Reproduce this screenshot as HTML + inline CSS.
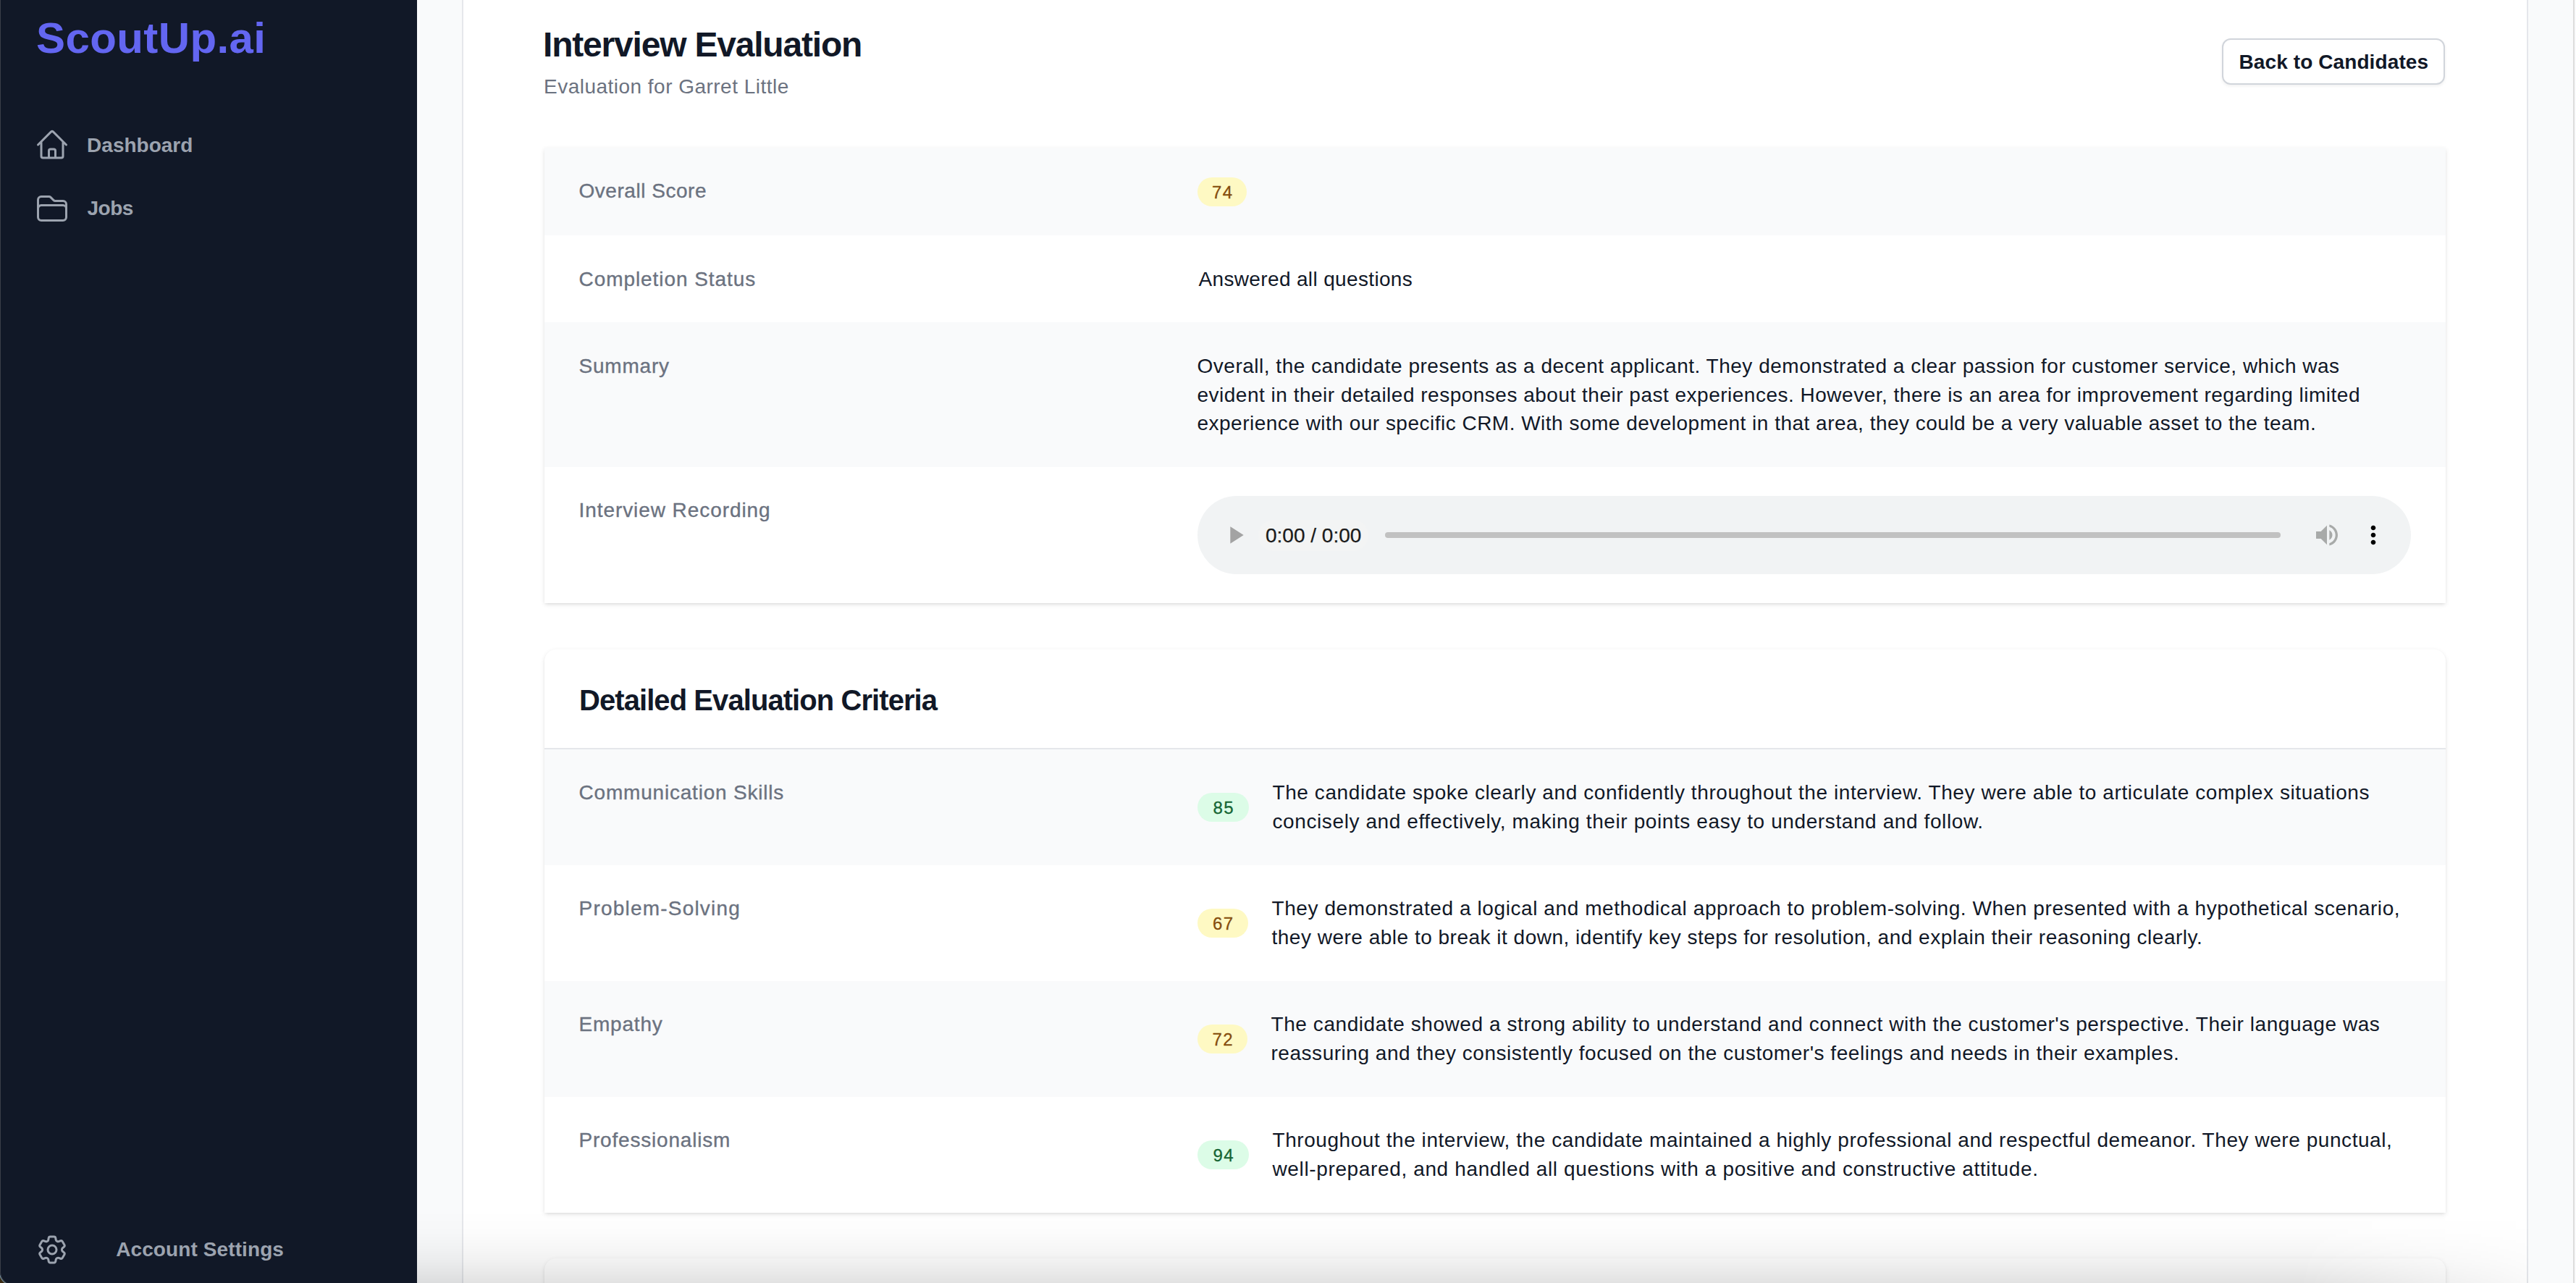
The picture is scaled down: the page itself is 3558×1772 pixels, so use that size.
<!DOCTYPE html>
<html><head><meta charset="utf-8"><title>Interview Evaluation</title>
<style>
html,body{margin:0;padding:0}
body{width:3558px;height:1772px;overflow:hidden;position:relative;background:#f9fafb;font-family:"Liberation Sans",sans-serif;}
.t{position:absolute;white-space:nowrap;}
.abs{position:absolute;}
</style></head><body>
<div class="abs" style="left:0;top:0;width:576px;height:1772px;background:#111827;"></div>
<div class="abs" style="left:0;top:0;width:1px;height:1772px;background:#3b3f48;"></div>
<div class="t" style="left:50.0px;top:18.2px;font-size:60px;line-height:70px;color:#6366f1;font-weight:700;letter-spacing:0.4px;">ScoutUp.ai</div>
<svg style="position:absolute;left:48px;top:176px" width="48" height="48" viewBox="0 0 24 24" fill="none" stroke="#9ca3af" stroke-width="1.5" stroke-linecap="round" stroke-linejoin="round"><path d="m2.25 12 8.954-8.955c.44-.439 1.152-.439 1.591 0L21.75 12M4.5 9.75v10.125c0 .621.504 1.125 1.125 1.125H9.75v-4.875c0-.621.504-1.125 1.125-1.125h2.25c.621 0 1.125.504 1.125 1.125V21h4.125c.621 0 1.125-.504 1.125-1.125V9.75M8.25 21h8.25"/></svg>
<div class="t" style="left:120.1px;top:180.8px;font-size:28px;line-height:40px;color:#9ca3af;font-weight:700;letter-spacing:0px;">Dashboard</div>
<svg style="position:absolute;left:48px;top:264px" width="48" height="48" viewBox="0 0 24 24" fill="none" stroke="#9ca3af" stroke-width="1.5" stroke-linecap="round" stroke-linejoin="round"><path d="M2.25 12.75V12A2.25 2.25 0 0 1 4.5 9.75h15A2.25 2.25 0 0 1 21.75 12v.75m-8.69-6.44-2.12-2.12a1.5 1.5 0 0 0-1.061-.44H4.5A2.25 2.25 0 0 0 2.25 6v12a2.25 2.25 0 0 0 2.25 2.25h15A2.25 2.25 0 0 0 21.75 18V9a2.25 2.25 0 0 0-2.25-2.25h-5.379a1.5 1.5 0 0 1-1.06-.44Z"/></svg>
<div class="t" style="left:120.5px;top:268.1px;font-size:28px;line-height:40px;color:#9ca3af;font-weight:700;letter-spacing:-0.5px;">Jobs</div>
<svg style="position:absolute;left:48px;top:1702px" width="48" height="48" viewBox="0 0 24 24" fill="none" stroke="#9ca3af" stroke-width="1.5" stroke-linecap="round" stroke-linejoin="round"><path d="M9.594 3.94c.09-.542.56-.94 1.11-.94h2.593c.55 0 1.02.398 1.11.94l.213 1.281c.063.374.313.686.645.87.074.04.147.083.22.127.325.196.72.257 1.075.124l1.217-.456a1.125 1.125 0 0 1 1.37.49l1.296 2.247a1.125 1.125 0 0 1-.26 1.431l-1.003.827c-.293.241-.438.613-.43.992a7.723 7.723 0 0 1 0 .255c-.008.378.137.75.43.991l1.004.827c.424.35.534.955.26 1.43l-1.298 2.247a1.125 1.125 0 0 1-1.369.491l-1.217-.456c-.355-.133-.75-.072-1.076.124a6.47 6.47 0 0 1-.22.128c-.331.183-.581.495-.644.869l-.213 1.281c-.09.543-.56.94-1.11.94h-2.594c-.55 0-1.019-.398-1.11-.94l-.213-1.281c-.062-.374-.312-.686-.644-.87a6.52 6.52 0 0 1-.22-.127c-.325-.196-.72-.257-1.076-.124l-1.217.456a1.125 1.125 0 0 1-1.369-.49l-1.297-2.247a1.125 1.125 0 0 1 .26-1.431l1.004-.827c.292-.24.437-.613.43-.991a6.932 6.932 0 0 1 0-.255c.007-.38-.138-.751-.43-.992l-1.004-.827a1.125 1.125 0 0 1-.26-1.43l1.297-2.247a1.125 1.125 0 0 1 1.37-.491l1.216.456c.356.133.751.072 1.076-.124.072-.044.146-.086.22-.128.332-.183.582-.495.644-.869l.214-1.28ZM15 12a3 3 0 1 1-6 0 3 3 0 0 1 6 0Z"/></svg>
<div class="t" style="left:160.2px;top:1706.2px;font-size:28px;line-height:40px;color:#9ca3af;font-weight:700;letter-spacing:0.1px;">Account Settings</div>
<div class="abs" style="left:638px;top:0;width:2850px;height:1772px;background:#fff;border-left:2px solid #e5e7eb;border-right:2px solid #e5e7eb;"></div>
<div class="abs" style="left:3554px;top:0;width:2px;height:1772px;background:#dcdcdc;"></div>
<div class="t" style="left:750.0px;top:30.2px;font-size:48px;line-height:64px;color:#111827;font-weight:700;letter-spacing:-1.2px;">Interview Evaluation</div>
<div class="t" style="left:751.0px;top:100.2px;font-size:28px;line-height:40px;color:#6b7280;font-weight:400;letter-spacing:0.48px;">Evaluation for Garret Little</div>
<div class="abs" style="left:3069px;top:53px;width:304px;height:60px;border:2px solid #d1d5db;border-radius:12px;background:#fff;box-shadow:0 2px 4px rgba(0,0,0,0.06);"></div>
<div class="t" style="left:3092.5px;top:66.2px;font-size:28px;line-height:40px;color:#111827;font-weight:700;letter-spacing:0.1px;">Back to Candidates</div>
<div class="abs" style="left:752px;top:204px;width:2626px;height:629px;background:#fff;border-radius:0;box-shadow:0 2px 6px rgba(0,0,0,0.10),0 2px 4px -2px rgba(0,0,0,0.10);"></div>
<div class="abs" style="left:752px;top:204px;width:2626px;height:121px;background:#f9fafb;"></div>
<div class="abs" style="left:752px;top:445px;width:2626px;height:200px;background:#f9fafb;"></div>
<div class="t" style="left:799.5px;top:243.8px;font-size:28px;line-height:40px;color:#6b7280;font-weight:400;letter-spacing:0.53px;-webkit-text-stroke:0.35px #6b7280;">Overall Score</div>
<div class="t" style="left:799.5px;top:365.5px;font-size:28px;line-height:40px;color:#6b7280;font-weight:400;letter-spacing:0.94px;-webkit-text-stroke:0.35px #6b7280;">Completion Status</div>
<div class="t" style="left:799.5px;top:485.6px;font-size:28px;line-height:40px;color:#6b7280;font-weight:400;letter-spacing:0.8px;-webkit-text-stroke:0.35px #6b7280;">Summary</div>
<div class="t" style="left:799.5px;top:685.1px;font-size:28px;line-height:40px;color:#6b7280;font-weight:400;letter-spacing:0.93px;-webkit-text-stroke:0.35px #6b7280;">Interview Recording</div>
<div class="abs" style="left:1654px;top:245px;width:68px;height:40px;border-radius:20px;background:#fef9c3;"></div>
<div class="t" style="left:1654px;width:68px;text-align:center;top:250.0px;font-size:24px;line-height:32px;color:#854d0e;letter-spacing:1.5px;text-indent:1.5px;-webkit-text-stroke:0.3px currentColor;">74</div>
<div class="t" style="left:1655.5px;top:365.7px;font-size:28px;line-height:40px;color:#111827;font-weight:400;letter-spacing:0.35px;">Answered all questions</div>
<div class="t" style="left:1653.5px;top:485.8px;font-size:28px;line-height:40px;color:#111827;font-weight:400;letter-spacing:0.51px;">Overall, the candidate presents as a decent applicant. They demonstrated a clear passion for customer service, which was</div>
<div class="t" style="left:1653.5px;top:525.6px;font-size:28px;line-height:40px;color:#111827;font-weight:400;letter-spacing:0.5px;">evident in their detailed responses about their past experiences. However, there is an area for improvement regarding limited</div>
<div class="t" style="left:1653.5px;top:565.4px;font-size:28px;line-height:40px;color:#111827;font-weight:400;letter-spacing:0.49px;">experience with our specific CRM. With some development in that area, they could be a very valuable asset to the team.</div>
<div class="abs" style="left:1654px;top:685px;width:1676px;height:108px;border-radius:54px;background:#f1f3f4;"></div>
<svg class="abs" style="left:1685.7px;top:718.9px" width="40" height="40" viewBox="0 0 24 24"><path d="M8 5v14l11-7z" fill="#a3a3a3"/></svg>
<div class="abs" style="left:1738px;top:718px;width:152px;height:43px;border-radius:21px;background:#f3f4f4;"></div>
<div class="t" style="left:1748.0px;top:719.6px;font-size:28px;line-height:40px;color:#1a1a1a;font-weight:400;letter-spacing:0px;-webkit-text-stroke:0.25px #1a1a1a;">0:00 / 0:00</div>
<div class="abs" style="left:1913px;top:735px;width:1237px;height:8px;border-radius:4px;background:#c1c1c1;"></div>
<svg class="abs" style="left:3194px;top:718.8px" width="40" height="40" viewBox="0 0 24 24"><path d="M3 9v6h4l5 5V4L7 9H3zm13.5 3c0-1.77-1.02-3.29-2.5-4.03v8.05c1.48-.73 2.5-2.25 2.5-4.02zM14 3.23v2.06c2.89.86 5 3.54 5 6.71s-2.11 5.85-5 6.71v2.06c4.01-.91 7-4.49 7-8.77s-2.99-7.86-7-8.77z" fill="#a8aaa9"/></svg>
<svg class="abs" style="left:3258px;top:719px" width="40" height="40" viewBox="0 0 24 24"><path d="M12 8c1.1 0 2-.9 2-2s-.9-2-2-2-2 .9-2 2 .9 2 2 2zm0 2c-1.1 0-2 .9-2 2s.9 2 2 2 2-.9 2-2-.9-2-2-2zm0 6c-1.1 0-2 .9-2 2s.9 2 2 2 2-.9 2-2-.9-2-2-2z" fill="#000"/></svg>
<div class="abs" style="left:752px;top:897px;width:2626px;height:778px;background:#fff;border-radius:16px 16px 0 0;box-shadow:0 2px 6px rgba(0,0,0,0.10),0 2px 4px -2px rgba(0,0,0,0.10);"></div>
<div class="t" style="left:800.0px;top:939.0px;font-size:40px;line-height:56px;color:#111827;font-weight:700;letter-spacing:-0.93px;">Detailed Evaluation Criteria</div>
<div class="abs" style="left:752px;top:1033px;width:2626px;height:2px;background:#e5e7eb;"></div>
<div class="abs" style="left:752px;top:1035px;width:2626px;height:160px;background:#f9fafb;"></div>
<div class="t" style="left:799.5px;top:1075.2px;font-size:28px;line-height:40px;color:#6b7280;font-weight:400;letter-spacing:0.8px;-webkit-text-stroke:0.35px #6b7280;">Communication Skills</div>
<div class="abs" style="left:1654px;top:1095px;width:71px;height:40px;border-radius:20px;background:#dcfce7;"></div>
<div class="t" style="left:1654px;width:71px;text-align:center;top:1100.0px;font-size:24px;line-height:32px;color:#166534;letter-spacing:1.5px;text-indent:1.5px;-webkit-text-stroke:0.3px currentColor;">85</div>
<div class="t" style="left:1757.5px;top:1075.1px;font-size:28px;line-height:40px;color:#111827;font-weight:400;letter-spacing:0.5862068965517242px;">The candidate spoke clearly and confidently throughout the interview. They were able to articulate complex situations</div>
<div class="t" style="left:1757.5px;top:1115.3px;font-size:28px;line-height:40px;color:#111827;font-weight:400;letter-spacing:0.5986842105263158px;">concisely and effectively, making their points easy to understand and follow.</div>
<div class="t" style="left:799.5px;top:1235.2px;font-size:28px;line-height:40px;color:#6b7280;font-weight:400;letter-spacing:1.21px;-webkit-text-stroke:0.35px #6b7280;">Problem-Solving</div>
<div class="abs" style="left:1654px;top:1255px;width:70px;height:40px;border-radius:20px;background:#fef9c3;"></div>
<div class="t" style="left:1654px;width:70px;text-align:center;top:1260.0px;font-size:24px;line-height:32px;color:#854d0e;letter-spacing:1.5px;text-indent:1.5px;-webkit-text-stroke:0.3px currentColor;">67</div>
<div class="t" style="left:1756.5px;top:1235.1px;font-size:28px;line-height:40px;color:#111827;font-weight:400;letter-spacing:0.5826086956521739px;">They demonstrated a logical and methodical approach to problem-solving. When presented with a hypothetical scenario,</div>
<div class="t" style="left:1756.5px;top:1275.3px;font-size:28px;line-height:40px;color:#111827;font-weight:400;letter-spacing:0.5px;">they were able to break it down, identify key steps for resolution, and explain their reasoning clearly.</div>
<div class="abs" style="left:752px;top:1355px;width:2626px;height:160px;background:#f9fafb;"></div>
<div class="t" style="left:799.5px;top:1395.2px;font-size:28px;line-height:40px;color:#6b7280;font-weight:400;letter-spacing:0.8px;-webkit-text-stroke:0.35px #6b7280;">Empathy</div>
<div class="abs" style="left:1654px;top:1415px;width:69px;height:40px;border-radius:20px;background:#fef9c3;"></div>
<div class="t" style="left:1654px;width:69px;text-align:center;top:1420.0px;font-size:24px;line-height:32px;color:#854d0e;letter-spacing:1.5px;text-indent:1.5px;-webkit-text-stroke:0.3px currentColor;">72</div>
<div class="t" style="left:1755.5px;top:1395.1px;font-size:28px;line-height:40px;color:#111827;font-weight:400;letter-spacing:0.5701754385964912px;">The candidate showed a strong ability to understand and connect with the customer's perspective. Their language was</div>
<div class="t" style="left:1755.5px;top:1435.3px;font-size:28px;line-height:40px;color:#111827;font-weight:400;letter-spacing:0.53125px;">reassuring and they consistently focused on the customer's feelings and needs in their examples.</div>
<div class="t" style="left:799.5px;top:1555.2px;font-size:28px;line-height:40px;color:#6b7280;font-weight:400;letter-spacing:0.8px;-webkit-text-stroke:0.35px #6b7280;">Professionalism</div>
<div class="abs" style="left:1654px;top:1575px;width:71px;height:40px;border-radius:20px;background:#dcfce7;"></div>
<div class="t" style="left:1654px;width:71px;text-align:center;top:1580.0px;font-size:24px;line-height:32px;color:#166534;letter-spacing:1.5px;text-indent:1.5px;-webkit-text-stroke:0.3px currentColor;">94</div>
<div class="t" style="left:1757.5px;top:1555.1px;font-size:28px;line-height:40px;color:#111827;font-weight:400;letter-spacing:0.5603448275862069px;">Throughout the interview, the candidate maintained a highly professional and respectful demeanor. They were punctual,</div>
<div class="t" style="left:1757.5px;top:1595.3px;font-size:28px;line-height:40px;color:#111827;font-weight:400;letter-spacing:0.6341463414634146px;">well-prepared, and handled all questions with a positive and constructive attitude.</div>
<div class="abs" style="left:752px;top:1738px;width:2626px;height:200px;background:#fff;border-radius:16px;box-shadow:0 2px 6px rgba(0,0,0,0.10),0 2px 4px -2px rgba(0,0,0,0.10);"></div>
<div class="abs" style="left:576px;top:1672px;width:2916px;height:100px;background:linear-gradient(to bottom,rgba(0,0,0,0) 0px,rgba(0,0,0,0.012) 30px,rgba(0,0,0,0.035) 55px,rgba(0,0,0,0.06) 72px,rgba(0,0,0,0.115) 100px);-webkit-mask-image:linear-gradient(to right,#000 0px,#000 2600px,rgba(0,0,0,0.3) 2880px,rgba(0,0,0,0.2) 2916px);"></div>
<div class="abs" style="left:0;top:1750px;width:24px;height:22px;background:#3a2a12;"></div><div class="abs" style="left:0;top:1730px;width:30px;height:44px;background:#111827;border-bottom-left-radius:17px;box-shadow:inset 1px 0 0 #3b3f48,-1px 1px 0 0 #6f8793;"></div>
</body></html>
